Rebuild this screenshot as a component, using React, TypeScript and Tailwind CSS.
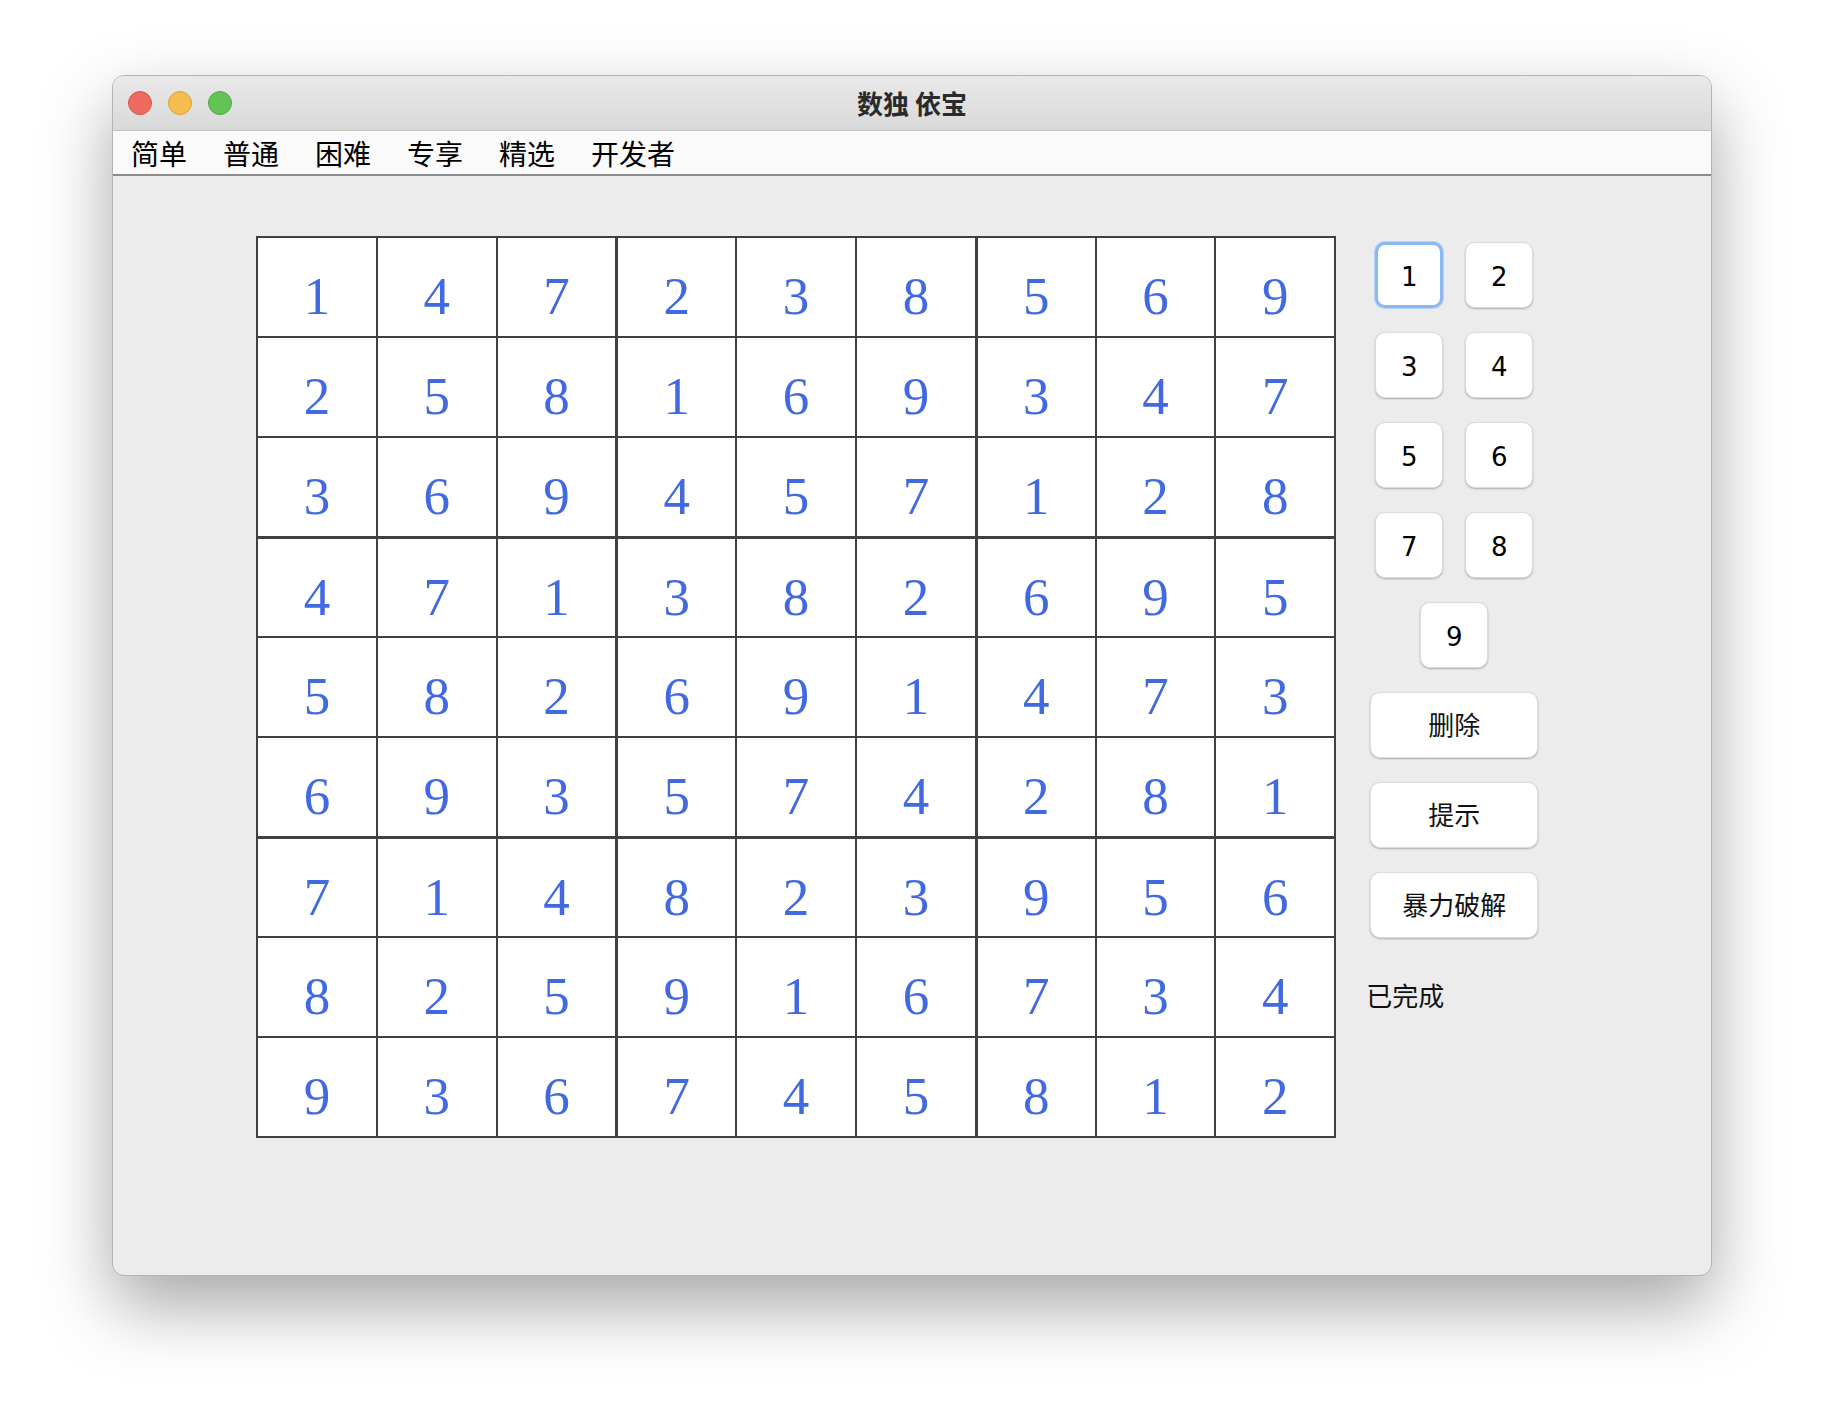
import React from "react";

const BOARD: number[][] = [
  [1, 4, 7, 2, 3, 8, 5, 6, 9],
  [2, 5, 8, 1, 6, 9, 3, 4, 7],
  [3, 6, 9, 4, 5, 7, 1, 2, 8],
  [4, 7, 1, 3, 8, 2, 6, 9, 5],
  [5, 8, 2, 6, 9, 1, 4, 7, 3],
  [6, 9, 3, 5, 7, 4, 2, 8, 1],
  [7, 1, 4, 8, 2, 3, 9, 5, 6],
  [8, 2, 5, 9, 1, 6, 7, 3, 4],
  [9, 3, 6, 7, 4, 5, 8, 1, 2],
];

const UI_FONT = '"DejaVu Sans", "Noto Sans CJK SC", sans-serif';
const CJK_FONT = '"Noto Sans CJK SC", "Noto Sans", sans-serif';

function NumButton({ n, focused }: { n: number; focused?: boolean }) {
  return (
    <div
      className={
        "w-[68px] h-[66px] flex items-center justify-center pt-[4px] bg-white rounded-[10px] text-[26px] text-black " +
        (focused
          ? "border-[3px] border-[#8cb8f2] shadow-[0_0_0_1px_#b7d3f7]"
          : "border border-[#dcdcdc] shadow-[0_1px_2px_rgba(0,0,0,0.28)]")
      }
      style={{ fontFamily: UI_FONT }}
    >
      {n}
    </div>
  );
}

function ActionButton({ label }: { label: string }) {
  return (
    <div
      className="w-[168px] h-[66px] flex items-center justify-center pb-[3px] bg-white rounded-[10px] border border-[#dcdcdc] shadow-[0_1px_2px_rgba(0,0,0,0.28)] text-[26px] text-[#111]"
      style={{ fontFamily: CJK_FONT }}
    >
      {label}
    </div>
  );
}

export default function App() {
  return (
    <div className="w-[1824px] h-[1424px] bg-white overflow-hidden">
      <div className="ml-[112px] mt-[75px] w-[1600px] h-[1201px] rounded-[12px] overflow-hidden border border-[#b4b4b4] bg-[#ececec] shadow-[0_30px_70px_rgba(0,0,0,0.35)] flex flex-col">
        {/* Title bar */}
        <div className="relative h-[55px] shrink-0 bg-gradient-to-b from-[#e9e9e9] to-[#d9d9d9] border-b border-[#c2c2c2] flex items-center justify-center">
          <div className="absolute left-[15px] top-[15px] flex gap-[16px]">
            <div className="w-[24px] h-[24px] rounded-full bg-[#ee6a5f] border border-[#d5554b]" />
            <div className="w-[24px] h-[24px] rounded-full bg-[#f5bd4f] border border-[#d9a03c]" />
            <div className="w-[24px] h-[24px] rounded-full bg-[#61c454] border border-[#4ea843]" />
          </div>
          <div
            className="text-[26px] font-bold text-[#2a2a2a] leading-none"
            style={{ fontFamily: CJK_FONT }}
          >
            数独 依宝
          </div>
        </div>
        {/* Menu bar */}
        <div
          className="h-[45px] shrink-0 bg-[#fafafa] border-b-2 border-[#8c8c8c] flex items-center"
          style={{ fontFamily: CJK_FONT }}
        >
          {["简单", "普通", "困难", "专享", "精选", "开发者"].map((m) => (
            <div key={m} className="px-[18px] text-[28px] leading-none text-black">
              {m}
            </div>
          ))}
        </div>
        {/* Content */}
        <div className="flex-1 flex pt-[60px] pl-[143px]">
          <div className="border-r-2 border-b-2 border-[#404040] self-start">
            {BOARD.map((row, r) => (
              <div key={r} className="flex">
                {row.map((v, c) => (
                  <div
                    key={c}
                    className={
                      "w-[119.8px] h-[100px] bg-white border-[#404040] flex justify-center pt-[32px] " +
                      (c === 3 || c === 6 ? "border-l-[3px] " : "border-l-2 ") +
                      (r === 3 || r === 6 ? "border-t-[3px]" : "border-t-2")
                    }
                  >
                    <span
                      className="text-[53px] leading-none text-[#4169e1]"
                      style={{ fontFamily: '"Liberation Serif", "Times New Roman", serif' }}
                    >
                      {v}
                    </span>
                  </div>
                ))}
              </div>
            ))}
          </div>
          <div className="ml-[30px] w-[176px] pt-[6px] flex flex-col items-center">
            <div className="flex gap-[22px]">
              <NumButton n={1} focused />
              <NumButton n={2} />
            </div>
            <div className="flex gap-[22px] mt-[24px]">
              <NumButton n={3} />
              <NumButton n={4} />
            </div>
            <div className="flex gap-[22px] mt-[24px]">
              <NumButton n={5} />
              <NumButton n={6} />
            </div>
            <div className="flex gap-[22px] mt-[24px]">
              <NumButton n={7} />
              <NumButton n={8} />
            </div>
            <div className="mt-[24px]">
              <NumButton n={9} />
            </div>
            <div className="mt-[24px]">
              <ActionButton label="删除" />
            </div>
            <div className="mt-[24px]">
              <ActionButton label="提示" />
            </div>
            <div className="mt-[24px]">
              <ActionButton label="暴力破解" />
            </div>
            <div
              className="self-start mt-[44px] text-[26px] leading-[26px] text-[#111]"
              style={{ fontFamily: CJK_FONT }}
            >
              已完成
            </div>
          </div>
        </div>
      </div>
    </div>
  );
}
